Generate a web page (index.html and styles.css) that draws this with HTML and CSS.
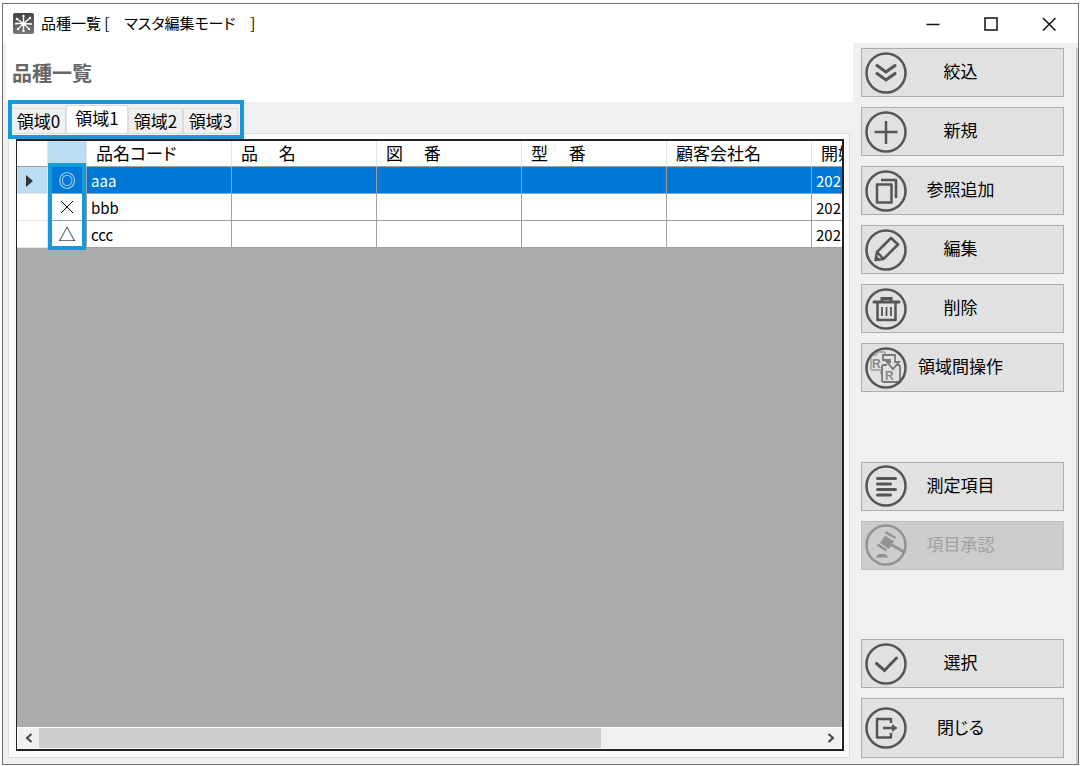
FILE: index.html
```
<!DOCTYPE html>
<html lang="ja">
<head>
  <meta charset="UTF-8">
  <title>品種一覧</title>
  <meta name="viewport" content="width=device-width, initial-scale=1">
  <link rel="stylesheet" href="styles.css">
</head>
<body>
  <div class="window">
    <header class="titlebar">
      <svg class="app-icon" viewBox="0 0 21 21">
        <defs>
          <linearGradient id="appGrad" x1="0" y1="0" x2="0" y2="1">
            <stop offset="0" stop-color="#444"/>
            <stop offset="1" stop-color="#777"/>
          </linearGradient>
        </defs>
        <rect width="21" height="21" rx="2" fill="url(#appGrad)"/>
        <path d="M10.5 10.5V3M10.5 10.5V18M10.5 10.5L4 6M10.5 10.5L17 5M10.5 10.5H3M10.5 10.5L18 11M10.5 10.5L5 16M10.5 10.5L16 16" stroke="#fff" stroke-width="1.3"/>
        <g fill="#fff">
          <circle cx="10.5" cy="10.5" r="2"/>
          <circle cx="10.5" cy="3" r="1.2"/><circle cx="10.5" cy="18" r="1.2"/>
          <circle cx="4" cy="6" r="1.2"/><circle cx="17" cy="5" r="1.2"/>
          <circle cx="3" cy="10.8" r="1"/><circle cx="18" cy="11" r="1"/>
          <circle cx="5" cy="16" r="1.2"/><circle cx="16" cy="16" r="1.2"/>
        </g>
      </svg>
      <span class="title">品種一覧 [　マスタ編集モード　]</span>
      <div class="window-buttons">
        <button type="button" aria-label="最小化"><svg viewBox="0 0 16 16"><path d="M1.500 8.500h13"/></svg></button>
        <button type="button" aria-label="最大化"><svg viewBox="0 0 16 16"><path d="M2 2h12v12H2z"/></svg></button>
        <button type="button" aria-label="ウィンドウを閉じる"><svg viewBox="0 0 16 16"><path d="M2 2l12.500 12.500M14.500 2L2 14.500"/></svg></button>
      </div>
    </header>

    <div class="content">
      <main class="main">
        <h1>品種一覧</h1>

        <div class="tabs" role="tablist">
          <button type="button" role="tab">領域0</button>
          <button type="button" role="tab" class="active" aria-selected="true">領域1</button>
          <button type="button" role="tab">領域2</button>
          <button type="button" role="tab">領域3</button>
        </div>

        <div class="tab-page">
          <div class="grid">
            <div class="grid-view">
              <table>
                <colgroup>
                  <col class="col-head"><col class="col-mark"><col class="col"><col class="col"><col class="col"><col class="col"><col class="col"><col class="col">
                </colgroup>
                <thead>
                  <tr>
                    <th></th>
                    <th class="current"></th>
                    <th>品名コード</th>
                    <th>品　 名</th>
                    <th>図　 番</th>
                    <th>型　 番</th>
                    <th>顧客会社名</th>
                    <th>開始</th>
                  </tr>
                </thead>
                <tbody>
                  <tr class="selected">
                    <td class="row-head"><svg viewBox="0 0 8 12"><path d="M0 0l7 6-7 6z"/></svg></td>
                    <td class="mark">◎</td><td>aaa</td><td></td><td></td><td></td><td></td><td>202</td>
                  </tr>
                  <tr>
                    <td class="row-head"></td>
                    <td class="mark"><svg viewBox="0 0 14 14"><path d="M1 1l12 12M13 1L1 13"/></svg></td><td>bbb</td><td></td><td></td><td></td><td></td><td>202</td>
                  </tr>
                  <tr>
                    <td class="row-head"></td>
                    <td class="mark">△</td><td>ccc</td><td></td><td></td><td></td><td></td><td>202</td>
                  </tr>
                </tbody>
              </table>
              <div class="mark-frame"></div>
            </div>
            <div class="scrollbar">
              <button type="button" aria-label="左へ"><svg viewBox="0 0 10 10"><path d="M7.500 1L3 5l4.500 4"/></svg></button>
              <div class="track"><div class="thumb"></div></div>
              <button type="button" aria-label="右へ"><svg viewBox="0 0 10 10"><path d="M2.500 1L7 5 2.500 9"/></svg></button>
            </div>
          </div>
        </div>
      </main>

      <aside class="sidebar">
        <div class="group">
          <button type="button" class="cmd">
            <svg viewBox="0 0 42 42"><circle cx="21" cy="21" r="19.500"/><path class="thick" d="M12 13.500l9 6.500 9-6.500M12 21.500l9 6.500 9-6.500"/></svg>
            <span>絞込</span>
          </button>
          <button type="button" class="cmd">
            <svg viewBox="0 0 42 42"><circle cx="21" cy="21" r="19.500"/><path d="M21 10v23M9.500 21h23"/></svg>
            <span>新規</span>
          </button>
          <button type="button" class="cmd">
            <svg viewBox="0 0 42 42"><circle cx="21" cy="21" r="19.500"/><path stroke-linejoin="round" d="M12 14.500h14.500v18H12zM16 10h15v18"/></svg>
            <span>参照追加</span>
          </button>
          <button type="button" class="cmd">
            <svg viewBox="0 0 42 42"><circle cx="21" cy="21" r="19.500"/><path stroke-linejoin="round" d="M10.500 31l1.500-8L26 9l7 6.500L18.500 30zM12 23l6.500 7"/><path class="fill" d="M9.500 32l1-6 5 5z"/></svg>
            <span>編集</span>
          </button>
          <button type="button" class="cmd">
            <svg viewBox="0 0 42 42"><circle cx="21" cy="21" r="19.500"/><path class="thick" d="M9 14h25M17 13v-2.500h9V13"/><path stroke-linejoin="round" d="M12.500 15v17h18V15"/><path class="thin" d="M17 19v9M21.500 19v9M26 19v9"/></svg>
            <span>削除</span>
          </button>
          <button type="button" class="cmd">
            <svg viewBox="0 0 42 42">
              <g class="light">
                <path d="M18 23H7.500q-1.500 0-1.500-1.500V9.500L9 8h2l2-3h6l2 3M16 27v-4"/>
                <text x="7" y="21">R</text>
              </g>
              <g class="medium">
                <path d="M18 8h12v7h4l-6 7-6-7h3v-2h-7z"/>
                <path d="M22 18h-3q-2 0-2 2v13q0 2 2 2h14q2 0 2-2V20q0-2-2-2h-1"/>
                <text x="20" y="33">R</text>
              </g>
              <circle cx="21" cy="21" r="19.500"/>
            </svg>
            <span>領域間操作</span>
          </button>
        </div>
        <div class="group">
          <button type="button" class="cmd">
            <svg viewBox="0 0 42 42"><circle cx="21" cy="21" r="19.500"/><path class="thick" d="M12.500 13.500h18M12.500 19h13M12.500 24.500h18M12.500 30h13"/></svg>
            <span>測定項目</span>
          </button>
          <button type="button" class="cmd" disabled>
            <svg viewBox="0 0 42 42"><circle cx="21" cy="21" r="19.500"/><path class="fill" d="M20 11.500l9 6-5 7.500-9-6zM11 33.500q1-3.500 4-3.500h4q3 0 4 3.500z"/><path class="thick" d="M26 20.500l13 7.500"/><path d="M20.500 8l10 6M12.500 20.500l9 6"/></svg>
            <span>項目承認</span>
          </button>
        </div>
        <div class="group">
          <button type="button" class="cmd">
            <svg viewBox="0 0 42 42"><circle cx="21" cy="21" r="19.500"/><path class="thick" d="M11.500 20.500l8 7L31.500 15"/></svg>
            <span>選択</span>
          </button>
          <button type="button" class="cmd tall">
            <svg viewBox="0 0 42 42"><circle cx="21" cy="21" r="19.500"/><path stroke-linejoin="round" d="M26 16v-4H12v18.500h14V26M18 21h12"/><path class="fill" d="M27 17l5.500 4-5.500 4z"/></svg>
            <span>閉じる</span>
          </button>
        </div>
      </aside>
    </div>
  </div>
</body>
</html>
```
FILE: styles.css
```
*, *::after {
  box-sizing: border-box;
}
body {
  margin: 0;
  padding: 3px 1px 1px 2px;
  min-height: 100vh;
  display: flex;
  background: #fff;
  color: #000;
  font-family: "Noto Sans CJK JP", sans-serif;
  font-size: 17px;
  font-feature-settings: "palt";
  line-height: 24px;
}
button {
  font: inherit;
  font-feature-settings: inherit;
  color: inherit;
  margin: 0;
  padding: 0;
  border: none;
  background: none;
}
svg {
  display: block;
  fill: none;
}
.window {
  flex: 1;
  min-width: 0;
  display: flex;
  flex-direction: column;
  border: 1px solid #707070;
  background: #f0f0f0;
}

/* title bar */
.titlebar {
  display: flex;
  align-items: center;
  height: 39px;
  padding-left: 10px;
  background: #fff;
}
.app-icon {
  width: 21px;
  height: 21px;
}
.title {
  margin-left: 7px;
  padding-bottom: 2px;
  font-size: 15px;
}
.window-buttons {
  display: flex;
  margin-left: auto;
}
.window-buttons button {
  display: flex;
  align-items: center;
  justify-content: center;
  width: 58px;
  height: 38px;
}
.window-buttons svg {
  width: 16px;
  height: 16px;
  stroke: #111;
  stroke-width: 1.5;
}

.content {
  flex: 1;
  display: flex;
}
.main {
  flex: 1;
  min-width: 0;
  display: flex;
  flex-direction: column;
}
h1 {
  margin: 0 0 0 3px;
  padding: 15px 6px;
  background: #fff;
  color: #666;
  font-size: 20px;
  line-height: 29px;
  font-feature-settings: normal;
}

/* tabs */
.tabs {
  position: relative;
  display: flex;
  align-items: flex-end;
  height: 31px;
  padding-left: 8px;
}
.tabs button {
  width: 55px;
  height: 25px;
  border: 1px solid #dcdcdc;
  border-bottom: none;
}
.tabs .active {
  width: 62px;
  height: 28px;
  padding-bottom: 4px;
  background: #fff;
}
.tabs::after {
  content: "";
  position: absolute;
  left: 5px;
  top: -2px;
  width: 236px;
  height: 39px;
  border: 4px solid #149ad9;
}
.tab-page {
  flex: 1;
  min-width: 0;
  display: flex;
  margin: 0 3px 6px 5px;
  padding: 5px 5px 6px 7px;
  border: 1px solid #dcdcdc;
  background: #fafafa;
}

/* data grid */
.grid {
  flex: 1;
  min-width: 0;
  display: flex;
  flex-direction: column;
  border: 2px solid #222;
  border-left-width: 1px;
  background: #ababab;
}
.grid-view {
  position: relative;
  flex: 1;
  overflow: hidden;
}
table {
  width: 940px;
  table-layout: fixed;
  border-collapse: separate;
  border-spacing: 0;
}
.col-head {
  width: 31px;
}
.col-mark {
  width: 39px;
}
.col {
  width: 145px;
}
th {
  height: 26px;
  padding: 0 0 1px 9px;
  border-right: 1px solid #e3e3e3;
  border-bottom: 1px solid #a0a0a0;
  background: #fff;
  font-weight: normal;
  text-align: left;
  white-space: nowrap;
}
th.current {
  background: #bcdcf4;
}
td {
  height: 27px;
  padding: 2px 0 0 4px;
  border-right: 1px solid #a0a0a0;
  border-bottom: 1px solid #a0a0a0;
  background: #fff;
  font-size: 15px;
}
.row-head {
  padding-left: 9px;
  border-color: #e3e3e3;
}
.row-head svg {
  width: 8px;
  height: 12px;
  fill: #333;
}
.mark {
  padding: 0;
  font-size: 17px;
  text-align: center;
}
.mark svg {
  width: 14px;
  height: 14px;
  margin: 0 auto;
  stroke: #000;
}
.selected td {
  background: #0078d7;
  color: #fff;
}
.selected .row-head {
  background: #bcdcf4;
}
.mark-frame {
  position: absolute;
  left: 31px;
  top: 22px;
  width: 38px;
  height: 87px;
  border: 4px solid #149ad9;
}

.scrollbar {
  display: flex;
  height: 22px;
  border: 1px solid #fff;
  background: #f0f0f0;
}
.scrollbar button {
  display: flex;
  align-items: center;
  justify-content: center;
  width: 21px;
}
.scrollbar svg {
  width: 10px;
  height: 10px;
  stroke: #444;
  stroke-width: 2;
}
.track {
  flex: 1;
}
.thumb {
  width: 72%;
  height: 100%;
  background: #cdcdcd;
}

/* command buttons */
.sidebar {
  flex: none;
  width: 225px;
  display: flex;
  flex-direction: column;
  justify-content: space-between;
  margin-top: 5px;
  padding: 0 12px 6px 8px;
  border-right: 2px solid #c8c8c8;
}
.group {
  display: flex;
  flex-direction: column;
  gap: 10px;
}
.cmd {
  display: flex;
  align-items: center;
  height: 49px;
  padding: 0 49px 0 3px;
  border: 1px solid #adadad;
  background: #e1e1e1;
}
.cmd.tall {
  height: 60px;
}
.cmd svg {
  width: 42px;
  height: 42px;
  stroke: #555;
  stroke-width: 2.5;
}
.cmd span {
  flex: 1;
  padding-bottom: 3px;
  text-align: center;
  white-space: nowrap;
}
.cmd .thick {
  stroke-width: 3;
  stroke-linecap: round;
}
.cmd .thin {
  stroke-width: 1.8;
}
.cmd .fill {
  fill: #555;
  stroke: none;
}
.cmd .light {
  stroke: #aaa;
  stroke-width: 1.8;
}
.cmd .medium {
  stroke: #777;
  stroke-width: 1.8;
}
.cmd text {
  fill: #888;
  stroke: none;
  font: bold 12px "Liberation Sans", sans-serif;
}
.cmd:disabled {
  border-color: #bfbfbf;
  background: #ccc;
  color: #a0a0a0;
}
.cmd:disabled svg {
  stroke: #929292;
}
.cmd:disabled .fill {
  fill: #929292;
}
```
